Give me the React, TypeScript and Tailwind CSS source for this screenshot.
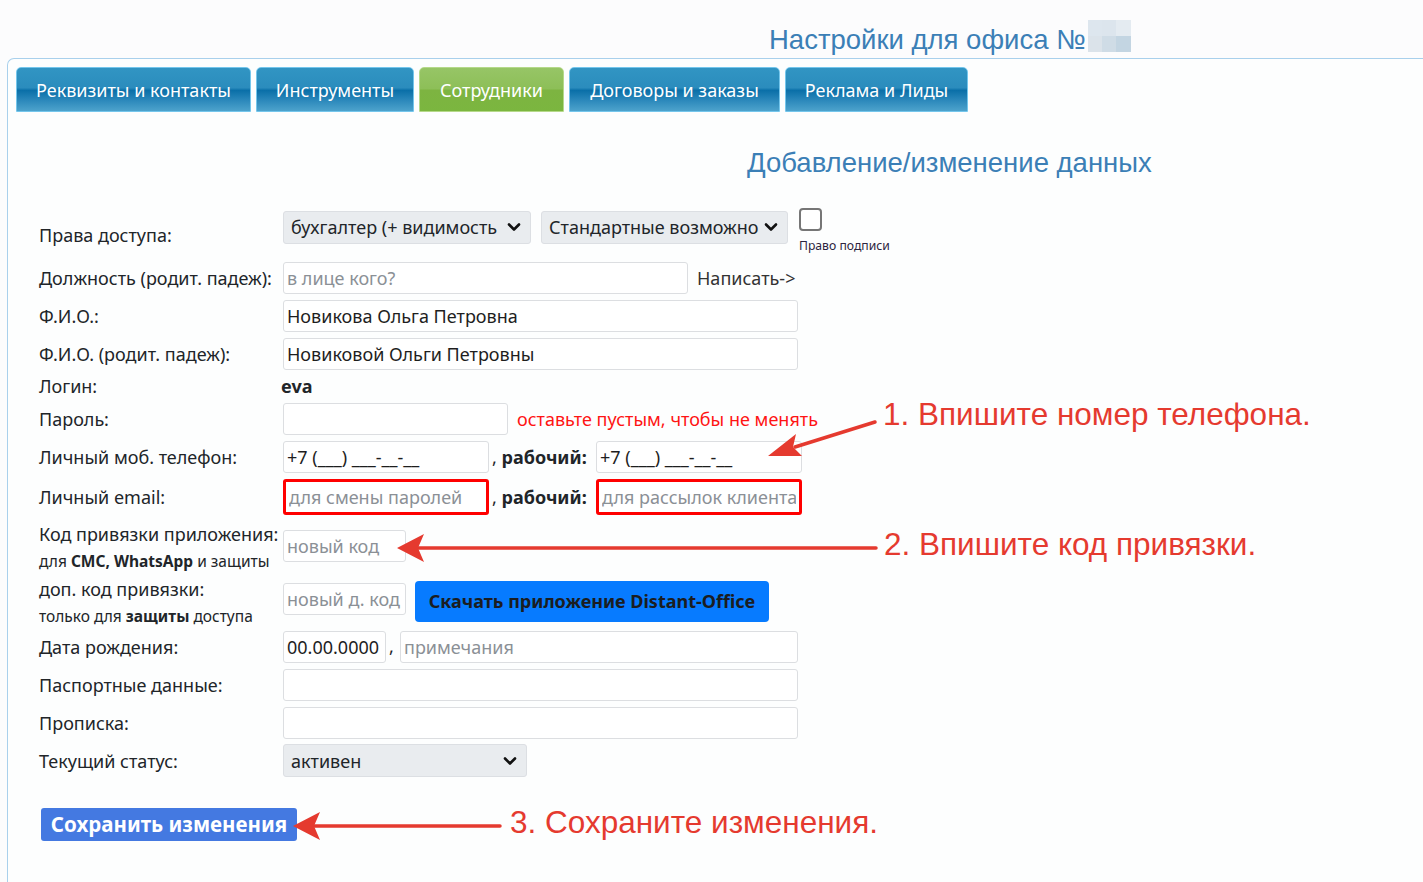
import type { ReactNode } from "react";

const Chevron = () => (
  <svg width="14" height="10" viewBox="0 0 14 10" className="shrink-0">
    <path d="M2 2.5 L7 7.5 L12 2.5" fill="none" stroke="#111" strokeWidth="2.6" strokeLinecap="round" strokeLinejoin="round" />
  </svg>
);

const Select = ({ text, width }: { text: string; width: string }) => (
  <div className={`flex h-[33px] ${width} items-center gap-1 rounded-[3px] border border-[#dcdfe3] bg-[#e9ecef] pl-[7px] pr-[9px] text-[#212529]`}>
    <span className="flex-1 overflow-hidden whitespace-nowrap pt-px">{text}</span>
    <Chevron />
  </div>
);

const Input = ({ width, value, placeholder, red }: { width: string; value?: string; placeholder?: string; red?: boolean }) => (
  <input
    readOnly
    defaultValue={value}
    placeholder={placeholder}
    className={`${width} rounded-[3px] bg-white px-[3px] pt-px text-[#1e1e1e] outline-none placeholder:text-[#8b9096] ${
      red ? "h-[36px] border-[3px] border-[#ff0000]" : "h-[32px] border border-[#dcdee1]"
    }`}
  />
);

const Row = ({ h, label, children }: { h: string; label: ReactNode; children?: ReactNode }) => (
  <div className={`flex ${h} items-center`}>
    <div className="w-[244px] shrink-0 whitespace-nowrap pt-px">{label}</div>
    {children}
  </div>
);

const tabs = [
  { name: "Реквизиты и контакты", w: "w-[235px]" },
  { name: "Инструменты", w: "w-[158px]" },
  { name: "Сотрудники", w: "w-[145px]", active: true },
  { name: "Договоры и заказы", w: "w-[211px]" },
  { name: "Реклама и Лиды", w: "w-[183px]" },
];

export default function App() {
  return (
    <div className="relative h-[882px] w-full overflow-hidden bg-[#fcfcfd] font-['Noto_Sans',sans-serif] text-[18px] text-[#212529]">
      {/* header */}
      <div className="flex h-[58px] items-start pl-[769px] pt-[20px]">
        <span className="mt-[6px] font-['Liberation_Sans',Arial,sans-serif] text-[27.5px] leading-none text-[#3b7fb6]">
          Настройки для офиса №
        </span>
        <div className="ml-[2px] grid h-[32px] w-[43px] grid-cols-3 grid-rows-2">
          <div className="bg-[#dde6ee]" />
          <div className="bg-[#dce5ed]" />
          <div className="bg-[#e4ebf1]" />
          <div className="bg-[#dbe3ea]" />
          <div className="bg-[#cfdce6]" />
          <div className="bg-[#c3d5e2]" />
        </div>
      </div>

      {/* panel */}
      <div className="ml-[7px] h-[830px] rounded-tl-[7px] border-l border-t border-[#a9d0ec] bg-[#fdfefe]">
        <div className="flex gap-[5px] pl-[8px] pt-[8px]">
          {tabs.map((t) => (
            <div
              key={t.name}
              className={`flex h-[45px] ${t.w} items-center justify-center rounded-t-[5px] border pt-[2px] text-[18px] text-white ${
                t.active
                  ? "border-[#b5d98a] bg-[linear-gradient(to_bottom,#97c566_0%,#8dbf58_48%,#7db441_52%,#7bb63f_100%)]"
                  : "border-[#74c6ec] bg-[linear-gradient(to_bottom,#3195c3_0%,#2b8cbd_46%,#0a6fa8_52%,#2b88bb_75%,#4da3cc_100%)]"
              }`}
            >
              {t.name}
            </div>
          ))}
        </div>

        <div className="mt-[37px] pl-[739px] font-['Liberation_Sans',Arial,sans-serif] text-[27.5px] leading-none text-[#3b7fb6]">
          Добавление/изменение данных
        </div>

        {/* form */}
        <div className="mt-[29px] pl-[31px]">
          <div className="flex h-[53px] items-start">
            <div className="w-[244px] shrink-0 pt-[17px] leading-[24px]">Права доступа:</div>
            <div className="mt-[5px]">
              <Select text="бухгалтер (+ видимость" width="w-[248px]" />
            </div>
            <div className="ml-[10px] mt-[5px]">
              <Select text="Стандартные возможно" width="w-[247px]" />
            </div>
            <div className="ml-[11px] flex flex-col">
              <div className="mt-[2px] h-[23px] w-[23px] rounded-[4px] border-2 border-[#767676] bg-white" />
              <div className="mt-[7px] text-[12.2px] leading-[16px] text-[#2d2540]">Право подписи</div>
            </div>
          </div>

          <Row h="h-[38px]" label="Должность (родит. падеж):">
            <Input width="w-[405px]" placeholder="в лице кого?" />
            <span className="ml-[9px] pt-px text-[#333]">Написать-&gt;</span>
          </Row>
          <Row h="h-[38px]" label="Ф.И.О.:">
            <Input width="w-[515px]" value="Новикова Ольга Петровна" />
          </Row>
          <Row h="h-[38px]" label="Ф.И.О. (родит. падеж):">
            <Input width="w-[515px]" value="Новиковой Ольги Петровны" />
          </Row>
          <Row h="h-[27px]" label="Логин:">
            <span className="-ml-[2px] pt-px font-bold">eva</span>
          </Row>
          <Row h="h-[38px]" label="Пароль:">
            <Input width="w-[225px]" />
            <span className="ml-[9px] pt-px text-[#ff1414]">оставьте пустым, чтобы не менять</span>
          </Row>
          <Row h="h-[38px]" label="Личный моб. телефон:">
            <Input width="w-[206px]" value="+7 (___) ___-__-__" />
            <span className="ml-[3px] w-[104px] pt-px">
              , <b>рабочий:</b>
            </span>
            <Input width="w-[206px]" value="+7 (___) ___-__-__" />
          </Row>
          <Row h="h-[42px]" label="Личный email:">
            <Input width="w-[206px]" placeholder="для смены паролей" red />
            <span className="ml-[3px] w-[104px] pt-px">
              , <b>рабочий:</b>
            </span>
            <Input width="w-[206px]" placeholder="для рассылок клиента" red />
          </Row>

          <div className="flex h-[57px] items-start">
            <div className="w-[244px] shrink-0 whitespace-nowrap pt-[4px]">
              <div className="leading-[24px]">Код привязки приложения:</div>
              <div className="mt-[5px] text-[15.5px] leading-[20px]">
                для <b>СМС, WhatsApp</b> и защиты
              </div>
            </div>
            <div className="mt-[12px]">
              <Input width="w-[123px]" placeholder="новый код" />
            </div>
          </div>

          <div className="flex h-[53px] items-start">
            <div className="w-[244px] shrink-0 whitespace-nowrap pt-[2px]">
              <div className="leading-[24px]">доп. код привязки:</div>
              <div className="mt-[5px] text-[15.5px] leading-[20px]">
                только для <b>защиты</b> доступа
              </div>
            </div>
            <div className="mt-[8px]">
              <Input width="w-[123px]" placeholder="новый д. код" />
            </div>
            <div className="ml-[9px] mt-[6px] flex h-[41px] w-[354px] items-center justify-center rounded-[4px] bg-[#077bff] font-bold text-[#1b1d21]">
              Скачать приложение Distant-Office
            </div>
          </div>

          <Row h="h-[38px]" label="Дата рождения:">
            <Input width="w-[103px]" value="00.00.0000" />
            <span className="ml-[3px] w-[11px]">,</span>
            <Input width="w-[398px]" placeholder="примечания" />
          </Row>
          <Row h="h-[39px]" label="Паспортные данные:">
            <Input width="w-[515px]" />
          </Row>
          <Row h="h-[37px]" label="Прописка:">
            <Input width="w-[515px]" />
          </Row>
          <Row h="h-[38px]" label="Текущий статус:">
            <Select text="активен" width="w-[244px]" />
          </Row>

          <div className="ml-[2px] mt-[28px] flex h-[33px] w-[256px] items-center justify-center rounded-[3px] bg-[#4479e1] pt-px text-[20.5px] font-bold text-white">
            Сохранить изменения
          </div>
        </div>
      </div>

      {/* annotations */}
      <svg className="pointer-events-none absolute left-0 top-0" width="1423" height="882">
        <g stroke="#e53a2f" strokeWidth="3.5" strokeLinecap="round" fill="#e53a2f">
          <line x1="875" y1="422" x2="795" y2="447" />
          <line x1="876" y1="548" x2="418" y2="548" />
          <line x1="500" y1="826" x2="314" y2="826" />
        </g>
        <g fill="#e53a2f">
          <polygon points="768,456 802,456 793,447 796,434" />
          <polygon points="397,548 424,534 418,548 424,562" />
          <polygon points="293,826 320,812 314,826 320,840" />
        </g>
      </svg>
      <div className="pointer-events-none absolute left-[883px] top-[399px] whitespace-nowrap font-['Liberation_Sans',Arial,sans-serif] text-[31.5px] leading-none text-[#e53a2f]">
        1. Впишите номер телефона.
      </div>
      <div className="pointer-events-none absolute left-[884px] top-[529px] whitespace-nowrap font-['Liberation_Sans',Arial,sans-serif] text-[31.5px] leading-none text-[#e53a2f]">
        2. Впишите код привязки.
      </div>
      <div className="pointer-events-none absolute left-[510px] top-[807px] whitespace-nowrap font-['Liberation_Sans',Arial,sans-serif] text-[31.5px] leading-none text-[#e53a2f]">
        3. Сохраните изменения.
      </div>
    </div>
  );
}
